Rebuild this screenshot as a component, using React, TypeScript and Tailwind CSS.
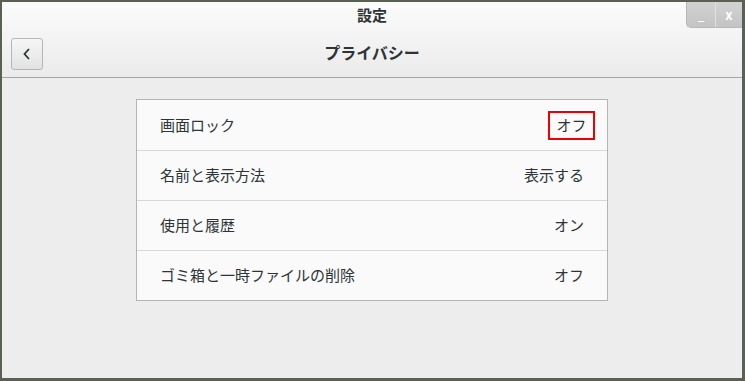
const rows = [
  { label: "画面ロック", value: "オフ", highlight: true },
  { label: "名前と表示方法", value: "表示する" },
  { label: "使用と履歴", value: "オン" },
  { label: "ゴミ箱と一時ファイルの削除", value: "オフ" },
];

export default function App() {
  return (
    <div
      className="h-[381px] w-[745px] bg-[#5b6152] pb-[3px] pl-[2px] pr-[3px] pt-[2px]"
      style={{ fontFamily: '"Noto Sans CJK JP", "Noto Sans", sans-serif' }}
    >
      <div className="flex h-full flex-col bg-[#ededed] text-[#2e3436]">
        <header className="relative h-[76px] border-b border-[#a5a5a5] bg-gradient-to-b from-[#fbfbfb] to-[#ebebeb]">
          <div className="flex h-[27px] items-center justify-center text-[15px] font-bold">
            設定
          </div>
          <div className="absolute right-0 top-0 flex h-[26px] overflow-hidden rounded-bl-[5px] border-b border-l border-[#b8b8b8] bg-gradient-to-b from-[#d2d2d2] to-[#c4c4c4] text-white">
            <div className="flex w-[28px] items-end justify-center pb-[6px] text-[11px] font-bold leading-none">
              _
            </div>
            <div className="w-px bg-[#e0e0e0]" />
            <div className="flex w-[26px] items-center justify-center text-[13px] font-bold leading-none">
              x
            </div>
          </div>
          <div className="relative flex h-[33px] items-center justify-center px-[9px] pt-[4px]">
            <button
              type="button"
              className="absolute left-[9px] top-[9px] flex h-[32px] w-[32px] items-center justify-center rounded-[3px] border border-[#b6b6b6] bg-gradient-to-b from-[#f6f6f6] to-[#e2e2e2]"
            >
              <svg width="10" height="14" viewBox="0 0 10 14">
                <path d="M7 2 L2.5 7 L7 12" fill="none" stroke="#2e3436" strokeWidth="1.8" />
              </svg>
            </button>
            <span className="mt-[9px] text-[16px] font-bold">プライバシー</span>
          </div>
        </header>

        <div className="flex justify-center pt-[21px]">
          <div className="w-[472px] border border-[#b4b4b4] bg-[#fafafa]">
            {rows.map((row, i) => (
              <div
                key={row.label}
                className={`flex h-[50px] items-center justify-between pl-[23px] pr-[23px] text-[15px] ${
                  i > 0 ? "border-t border-[#d8d8d8]" : ""
                }`}
              >
                <span>{row.label}</span>
                {row.highlight ? (
                  <span className="-mr-[11px] flex h-[29px] w-[47px] items-center justify-center border-2 border-[#ee0000]">
                    {row.value}
                  </span>
                ) : (
                  <span>{row.value}</span>
                )}
              </div>
            ))}
          </div>
        </div>
      </div>
    </div>
  );
}
